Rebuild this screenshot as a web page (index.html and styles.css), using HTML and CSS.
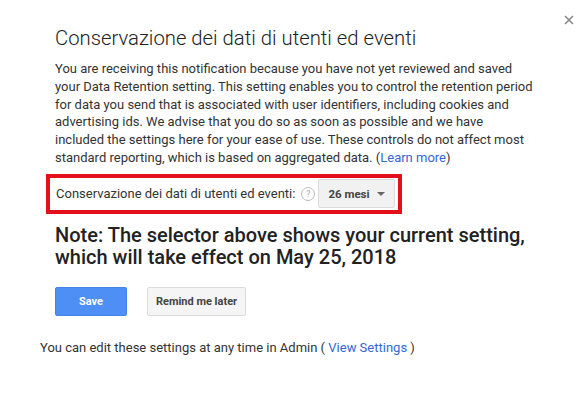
FILE: index.html
```html
<!DOCTYPE html>
<html>
<head>
<meta charset="utf-8">
<link rel="stylesheet" href="styles.css">
</head>
<body>
<div class="dialog">
  <div class="close" aria-label="close">
    <svg width="10" height="10" viewBox="0 0 10 10"><path d="M1 1L9 9M9 1L1 9" stroke="#8a8a8a" stroke-width="1.6"/></svg>
  </div>
  <div class="content">
    <h1 class="title">Conservazione dei dati di utenti ed eventi</h1>
    <p class="body">You are receiving this notification because you have not yet reviewed and saved your Data Retention setting. This setting enables you to control the retention period for data you send that is associated with user identifiers, including cookies and advertising ids. We advise that you do so as soon as possible and we have included the settings here for your ease of use. These controls do not affect most standard reporting, which is based on aggregated data. (<a class="link">Learn more</a>)</p>
    <div class="setting">
      <span class="label">Conservazione dei dati di utenti ed eventi:</span>
      <span class="help">?</span>
      <span class="select">26 mesi <span class="caret"></span></span>
    </div>
    <h2 class="note">Note: The selector above shows your current setting, which will take effect on May 25, 2018</h2>
    <div class="actions">
      <button class="btn primary">Save</button>
      <button class="btn secondary">Remind me later</button>
    </div>
  </div>
  <p class="footer">You can edit these settings at any time in Admin ( <a class="link">View Settings</a> )</p>
</div>
</body>
</html>
```
FILE: styles.css
```css
html, body {
  margin: 0;
  padding: 0;
  background: #fff;
}
body {
  font-family: Roboto, "Noto Sans", Arial, sans-serif;
  color: #333;
  width: 585px;
  height: 396px;
  overflow: hidden;
}
.dialog {
  position: relative;
  padding: 24px 0 0 40px;
}
.close {
  position: absolute;
  top: 15px;
  right: 11px;
  width: 10px;
  height: 10px;
  display: flex;
}
.content {
  padding-left: 15px;
}
.title {
  margin: 0;
  font-size: 20.3px;
  font-weight: 300;
  line-height: 28px;
  color: #222;
}
.body {
  margin: 8px 0 0 0;
  width: 480px;
  font-size: 13px;
  line-height: 17.8px;
  color: #333;
}
.link {
  color: #3367d6;
  text-decoration: none;
}
.setting {
  margin: 7px 0 0 -9px;
  width: 342px;
  height: 32px;
  border: 4px solid #e3101c;
  display: flex;
  align-items: center;
  padding-left: 6px;
}
.label {
  font-size: 13px;
  color: #333;
}
.help {
  margin-left: 6px;
  width: 12px;
  height: 12px;
  border: 1px solid #bbb;
  border-radius: 50%;
  font-size: 9px;
  color: #aaa;
  display: flex;
  align-items: center;
  justify-content: center;
}
.select {
  margin-left: 3px;
  height: 27px;
  padding: 0 9px 0 9px;
  background: #f1f1f1;
  border: 1px solid #dcdcdc;
  border-radius: 2px;
  font-size: 11.5px;
  font-weight: 700;
  color: #444;
  display: flex;
  align-items: center;
  gap: 7px;
}
.caret {
  width: 0;
  height: 0;
  border-left: 4px solid transparent;
  border-right: 4px solid transparent;
  border-top: 4px solid #666;
}
.note {
  margin: 10px 0 0 0;
  width: 490px;
  font-size: 20px;
  font-weight: 500;
  line-height: 22px;
  color: #222;
}
.actions {
  margin-top: 19px;
  display: flex;
  gap: 20px;
}
.btn {
  height: 29px;
  border-radius: 2px;
  font-family: Roboto, Arial, sans-serif;
  font-size: 11px;
  font-weight: 700;
  padding: 0;
}
.primary {
  width: 72px;
  background: #4d8ff5;
  border: 1px solid #4283ea;
  color: #fff;
}
.secondary {
  width: 99px;
  background: #f5f5f5;
  border: 1px solid #dcdcdc;
  color: #444;
}
.footer {
  margin: 24px 0 0 0;
  font-size: 13px;
  color: #333;
}
```
